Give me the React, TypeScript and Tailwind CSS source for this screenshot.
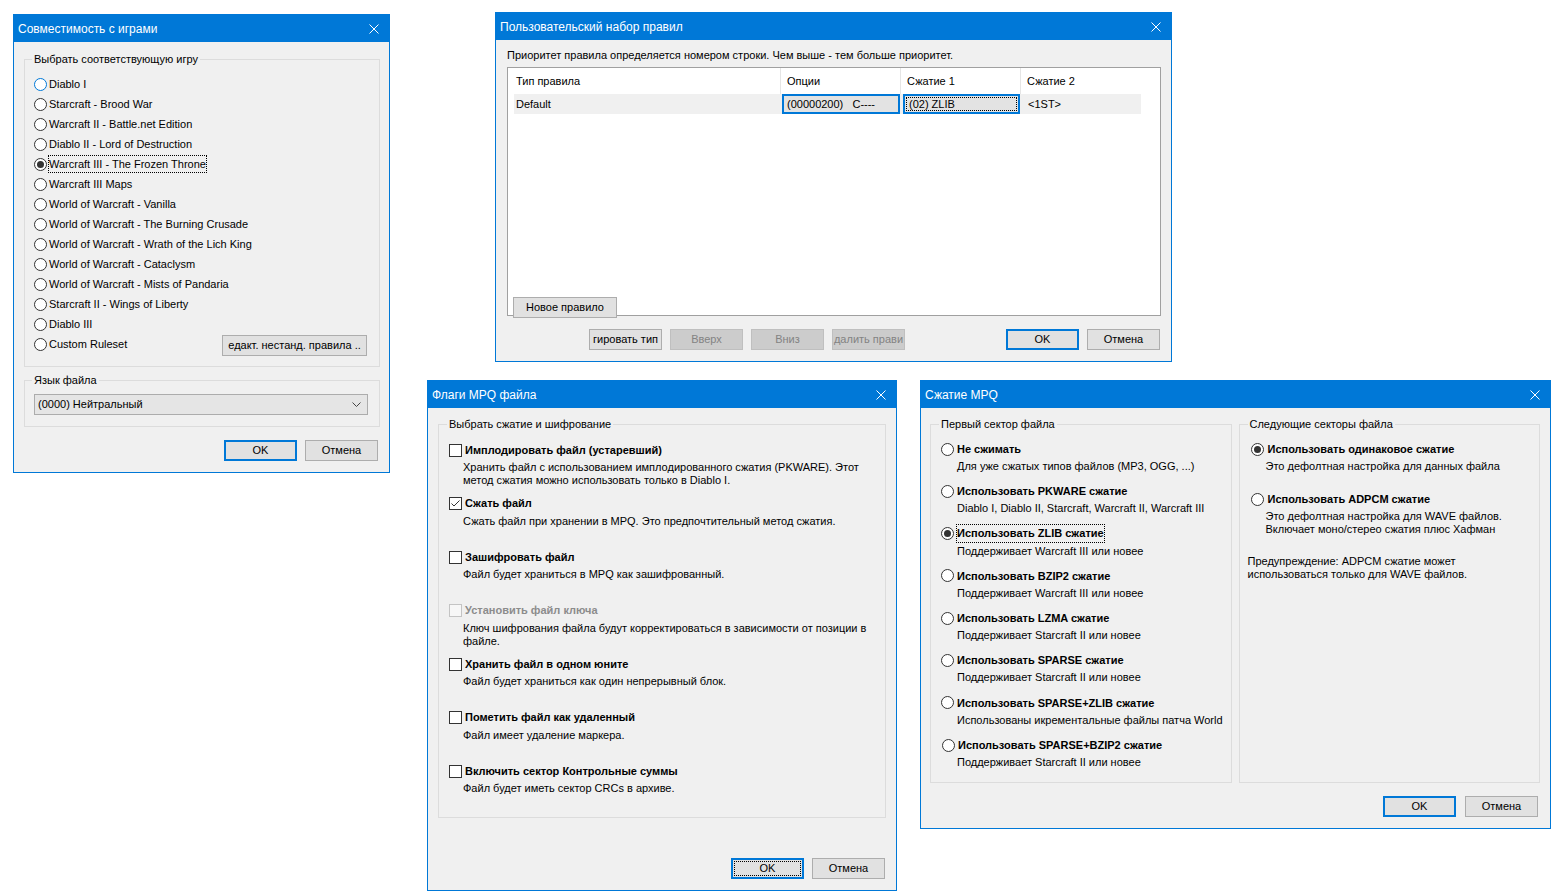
import React from 'react';

const CloseX: React.FC = () => (
    <svg width="10" height="10" viewBox="0 0 10 10" className="shrink-0">
        <path d="M0.5 0.5L9.5 9.5M9.5 0.5L0.5 9.5" stroke="white" strokeWidth="1" />
    </svg>
);

const Window: React.FC<{ title: string; className: string; children: React.ReactNode }> = ({ title, className, children }) => (
    <div className={`absolute flex flex-col border border-[#0078d7] bg-[#f0f0f0] ${className}`}>
        <div className="flex h-[27px] shrink-0 items-center justify-between bg-[#0078d7] pl-[4px] pr-[10px] text-[12px] text-white">
            <span>{title}</span>
            <CloseX />
        </div>
        {children}
    </div>
);

const Button: React.FC<{ label: string; primary?: boolean; focused?: boolean; disabled?: boolean; align?: 'center' | 'end'; className?: string }> = ({
    label,
    primary,
    focused,
    disabled,
    align = 'center',
    className = '',
}) => (
    <div
        className={`flex h-[21px] w-[73px] shrink-0 items-center overflow-hidden whitespace-nowrap ${align === 'end' ? 'justify-end pr-[3px]' : 'justify-center'} ${
            primary ? 'border-2 border-[#0078d7]' : disabled ? 'border border-[#bfbfbf]' : 'border border-[#adadad]'
        } ${disabled ? 'bg-[#cccccc] text-[#838383]' : 'bg-[#e1e1e1] text-black'} ${focused ? 'outline-1 outline-dotted outline-black outline-offset-[-4px]' : ''} ${className}`}
    >
        <span className="shrink-0">{label}</span>
    </div>
);

const Radio: React.FC<{ checked?: boolean; hover?: boolean }> = ({ checked, hover }) => (
    <span className={`flex h-[13px] w-[13px] shrink-0 items-center justify-center rounded-full border bg-white ${hover ? 'border-[#0078d7]' : 'border-[#333333]'}`}>
        {checked && <span className="h-[7px] w-[7px] rounded-full bg-[#333333]" />}
    </span>
);

const Check: React.FC<{ checked?: boolean; disabled?: boolean }> = ({ checked, disabled }) => (
    <span className={`flex h-[13px] w-[13px] shrink-0 items-center justify-center border ${disabled ? 'border-[#c4c4c4] bg-[#f7f7f7]' : 'border-[#333333] bg-white'}`}>
        {checked && (
            <svg width="11" height="11" viewBox="0 0 11 11">
                <path d="M1.5 5.5L4 8L9.5 2.5" fill="none" stroke="#333333" strokeWidth="1" />
            </svg>
        )}
    </span>
);

const games = [
    'Diablo I',
    'Starcraft - Brood War',
    'Warcraft II - Battle.net Edition',
    'Diablo II - Lord of Destruction',
    'Warcraft III - The Frozen Throne',
    'Warcraft III Maps',
    'World of Warcraft - Vanilla',
    'World of Warcraft - The Burning Crusade',
    'World of Warcraft - Wrath of the Lich King',
    'World of Warcraft - Cataclysm',
    'World of Warcraft - Mists of Pandaria',
    'Starcraft II - Wings of Liberty',
    'Diablo III',
];

const flags = [
    { title: 'Имплодировать файл (устаревший)', desc: ['Хранить файл с использованием имплодированного сжатия (PKWARE). Этот', 'метод сжатия можно использовать только в Diablo I.'] },
    { title: 'Сжать файл', desc: ['Сжать файл при хранении в MPQ. Это предпочтительный метод сжатия.'], checked: true },
    { title: 'Зашифровать файл', desc: ['Файл будет храниться в MPQ как зашифрованный.'] },
    { title: 'Установить файл ключа', desc: ['Ключ шифрования файла будут корректироваться в зависимости от позиции в', 'файле.'], disabled: true },
    { title: 'Хранить файл в одном юните', desc: ['Файл будет храниться как один непрерывный блок.'] },
    { title: 'Пометить файл как удаленный', desc: ['Файл имеет удаление маркера.'] },
    { title: 'Включить сектор Контрольные суммы', desc: ['Файл будет иметь сектор CRCs в архиве.'] },
];

const firstSector = [
    { title: 'Не сжимать', desc: 'Для уже сжатых типов файлов (MP3, OGG, ...)' },
    { title: 'Использовать PKWARE сжатие', desc: 'Diablo I, Diablo II, Starcraft, Warcraft II, Warcraft III' },
    { title: 'Использовать ZLIB сжатие', desc: 'Поддерживает Warcraft III или новее', checked: true },
    { title: 'Использовать BZIP2 сжатие', desc: 'Поддерживает Warcraft III или новее' },
    { title: 'Использовать LZMA сжатие', desc: 'Поддерживает Starcraft II или новее' },
    { title: 'Использовать SPARSE сжатие', desc: 'Поддерживает Starcraft II или новее' },
    { title: 'Использовать SPARSE+ZLIB сжатие', desc: 'Использованы икрементальные файлы патча World' },
    { title: 'Использовать SPARSE+BZIP2 сжатие', desc: 'Поддерживает Starcraft II или новее', nudge: true },
];

export default function App() {
    return (
        <div className="relative h-[891px] w-[1551px] overflow-hidden bg-white font-['Liberation_Sans',Arial,sans-serif] text-[11px] text-black">
            {/* Совместимость с играми */}
            <Window title="Совместимость с играми" className="left-[13px] top-[14px] h-[459px] w-[377px]">
                <div className="flex flex-1 flex-col pb-[11px] pl-[10px] pr-[9px]">
                    <fieldset className="mt-[10px] border border-[#dcdcdc]">
                        <legend className="ml-[7px] px-[2px] leading-[15px]">Выбрать соответствующую игру</legend>
                        <div className="flex flex-col pb-[12px] pl-[9px] pr-[12px] pt-[7px]">
                            {games.map((g, i) => (
                                <div key={g} className="flex h-[20px] items-center gap-[2px]">
                                    <Radio checked={i === 4} hover={i === 0} />
                                    <span className={i === 4 ? 'outline-1 outline-dotted outline-black' : ''}>{g}</span>
                                </div>
                            ))}
                            <div className="flex h-[20px] items-center justify-between">
                                <div className="flex items-center gap-[2px]">
                                    <Radio />
                                    <span>Custom Ruleset</span>
                                </div>
                                <Button label="едакт. нестанд. правила .." className="mt-[2px] w-[145px]" />
                            </div>
                        </div>
                    </fieldset>
                    <fieldset className="mt-[6px] border border-[#dcdcdc]">
                        <legend className="ml-[7px] px-[2px] leading-[15px]">Язык файла</legend>
                        <div className="pb-[11px] pl-[9px] pr-[11px] pt-[6px]">
                            <div className="flex h-[21px] items-center justify-between border border-[#acacac] bg-[#e5e5e5] pl-[3px] pr-[6px]">
                                <span>(0000) Нейтральный</span>
                                <svg width="9" height="5" viewBox="0 0 9 5">
                                    <path d="M0.5 0.5L4.5 4.5L8.5 0.5" fill="none" stroke="#444444" strokeWidth="1" />
                                </svg>
                            </div>
                        </div>
                    </fieldset>
                    <div className="mt-auto flex justify-end gap-[8px] pr-[2px]">
                        <Button label="OK" primary />
                        <Button label="Отмена" />
                    </div>
                </div>
            </Window>

            {/* Пользовательский набор правил */}
            <Window title="Пользовательский набор правил" className="left-[495px] top-[12px] h-[350px] w-[677px]">
                <div className="flex flex-1 flex-col pb-[11px] pl-[11px] pr-[10px] pt-[8px]">
                    <div className="leading-[15px]">Приоритет правила определяется номером строки. Чем выше - тем больше приоритет.</div>
                    <div className="relative mt-[4px] h-[249px] border border-[#a0a0a0] bg-white pl-[6px]">
                        <div className="flex h-[26px] w-[627px] items-center">
                            <div className="flex h-full w-[267px] items-center border-r border-[#e5e5e5] pl-[2px]">Тип правила</div>
                            <div className="flex h-full w-[120px] items-center border-r border-[#e5e5e5] pl-[6px]">Опции</div>
                            <div className="flex h-full w-[120px] items-center border-r border-[#e5e5e5] pl-[6px]">Сжатие 1</div>
                            <div className="flex h-full w-[120px] items-center pl-[6px]">Сжатие 2</div>
                        </div>
                        <div className="flex h-[20px] w-[627px] items-center bg-[#f0f0f0]">
                            <div className="w-[267px] pl-[2px]">Default</div>
                            <div className="h-full w-[120px] px-[1px]">
                                <div className="flex h-full items-center whitespace-pre border-2 border-[#0078d7] bg-[#e3e3e3] pl-[3px]">(00000200)   C----</div>
                            </div>
                            <div className="h-full w-[120px] pl-[2px] pr-[1px]">
                                <div className="flex h-full items-center border-2 border-[#0078d7] bg-[#e3e3e3] p-[1px]">
                                    <div className="flex h-full w-full items-center border border-dotted border-black pl-[2px]">(02) ZLIB</div>
                                </div>
                            </div>
                            <div className="w-[120px] pl-[7px]">&lt;1ST&gt;</div>
                        </div>
                        <Button label="Новое правило" className="absolute bottom-[-3px] left-[5px] w-[104px]" />
                    </div>
                    <div className="mt-auto flex items-center">
                        <div className="ml-[82px] flex gap-[8px]">
                            <Button label="гировать тип" align="end" />
                            <Button label="Вверх" disabled />
                            <Button label="Вниз" disabled />
                            <Button label="далить прави" disabled />
                        </div>
                        <div className="ml-auto mr-[1px] flex gap-[8px]">
                            <Button label="OK" primary />
                            <Button label="Отмена" />
                        </div>
                    </div>
                </div>
            </Window>

            {/* Флаги MPQ файла */}
            <Window title="Флаги MPQ файла" className="left-[427px] top-[380px] h-[511px] w-[470px]">
                <div className="flex flex-1 flex-col pb-[11px] px-[10px]">
                    <fieldset className="mt-[9px] h-[401px] border border-[#dcdcdc]">
                        <legend className="ml-[8px] px-[2px] leading-[15px]">Выбрать сжатие и шифрование</legend>
                        <div className="pl-[10px] pt-[9px]">
                            {flags.map((f) => (
                                <div key={f.title} className="h-[53.5px]">
                                    <div className="flex h-[18px] items-center gap-[3px]">
                                        <Check checked={f.checked} disabled={f.disabled} />
                                        <span className={`font-bold ${f.disabled ? 'text-[#8c8c8c]' : ''}`}>{f.title}</span>
                                    </div>
                                    <div className="whitespace-nowrap pl-[14px] pt-[2px] leading-[13px]">
                                        {f.desc.map((d) => (
                                            <div key={d}>{d}</div>
                                        ))}
                                    </div>
                                </div>
                            ))}
                        </div>
                    </fieldset>
                    <div className="mt-auto flex justify-end gap-[8px] pr-[1px]">
                        <Button label="OK" primary focused />
                        <Button label="Отмена" />
                    </div>
                </div>
            </Window>

            {/* Сжатие MPQ */}
            <Window title="Сжатие MPQ" className="left-[920px] top-[380px] h-[449px] w-[631px]">
                <div className="flex flex-1 flex-col pb-[11px] pl-[9px] pr-[10px]">
                    <div className="mt-[9px] flex gap-[7px]">
                        <fieldset className="h-[366px] flex-1 border border-[#dcdcdc]">
                            <legend className="ml-[8px] px-[2px] leading-[15px]">Первый сектор файла</legend>
                            <div className="pl-[10px] pt-[9px]">
                                {firstSector.map((s) => (
                                    <div key={s.title} className="h-[42.3px]">
                                        <div className={`flex h-[16px] items-center gap-[3px] ${s.nudge ? 'pl-[1px]' : ''}`}>
                                            <Radio checked={s.checked} />
                                            <span className={`font-bold ${s.checked ? 'outline-1 outline-dotted outline-black' : ''}`}>{s.title}</span>
                                        </div>
                                        <div className="whitespace-nowrap pl-[16px] pt-[3px] leading-[13px]">{s.desc}</div>
                                    </div>
                                ))}
                            </div>
                        </fieldset>
                        <fieldset className="h-[366px] flex-1 border border-[#dcdcdc]">
                            <legend className="ml-[8px] px-[2px] leading-[15px]">Следующие секторы файла</legend>
                            <div className="pl-[8px] pt-[9px]">
                                <div className="h-[50px] pl-[3px]">
                                    <div className="flex h-[16px] items-center gap-[4px]">
                                        <Radio checked />
                                        <span className="font-bold">Использовать одинаковое сжатие</span>
                                    </div>
                                    <div className="pl-[15px] pt-[3px] leading-[13px]">Это дефолтная настройка для данных файла</div>
                                </div>
                                <div className="pl-[3px]">
                                    <div className="flex h-[16px] items-center gap-[4px]">
                                        <Radio />
                                        <span className="font-bold">Использовать ADPCM сжатие</span>
                                    </div>
                                    <div className="pl-[15px] pt-[3px] leading-[13px]">
                                        <div>Это дефолтная настройка для WAVE файлов.</div>
                                        <div>Включает моно/стерео сжатия плюс Хафман</div>
                                    </div>
                                </div>
                                <div className="mt-[19px] leading-[13px]">
                                    <div>Предупреждение: ADPCM сжатие может</div>
                                    <div>использоваться только для WAVE файлов.</div>
                                </div>
                            </div>
                        </fieldset>
                    </div>
                    <div className="mt-auto flex justify-end gap-[9px] pr-[2px]">
                        <Button label="OK" primary />
                        <Button label="Отмена" />
                    </div>
                </div>
            </Window>
        </div>
    );
}
